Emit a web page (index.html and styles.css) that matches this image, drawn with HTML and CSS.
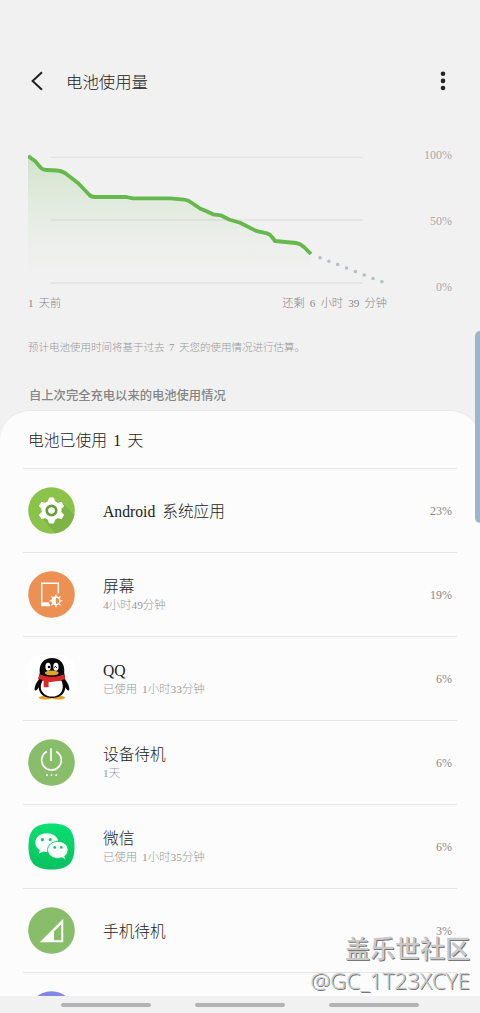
FILE: index.html
```html
<!DOCTYPE html>
<html lang="zh-CN">
<head>
    <meta charset="UTF-8">
    <title>电池使用量</title>
    <link rel="stylesheet" href="styles.css">
</head>
<body>
    <div class="screen">
        <header class="toolbar">
            <svg class="back" viewBox="0 0 12 20"><path d="M11 1.2L1.6 10L11 18.8"/></svg>
            <h1>电池使用量</h1>
            <svg class="more" viewBox="0 0 6 20"><circle cx="3" cy="2.7" r="2.3"/><circle cx="3" cy="9.9" r="2.3"/><circle cx="3" cy="17" r="2.3"/></svg>
        </header>

        <section class="usage">
            <svg class="chart" viewBox="28 150 360 136">
                <defs>
                    <linearGradient id="fill" x1="0" y1="156" x2="0" y2="282" gradientUnits="userSpaceOnUse">
                        <stop offset="0" stop-color="#6bbb50" stop-opacity=".25"/>
                        <stop offset="1" stop-color="#c8ddc0" stop-opacity="0"/>
                    </linearGradient>
                </defs>
                <path class="grid" d="M51 157.3H363"/>
                <path class="grid thick" d="M51 220H363M51 283H363"/>
                <path fill="url(#fill)" d="M28 156L35 161L41 168Q43 170 47 170L57 170.500Q61 170.700 65 173L78 183L89 194.500Q91 197 95 197H126L133 198.300H170L184 199.700Q188 200 192 203L200 208.500L206 211L213 214.300L220.700 215.300L229 219.500L240 222.700L256 230.800L267 233.300Q270 234 272 237L275 241L296 243Q300 243.500 304 247L311 254V282H28Z"/>
                <path class="level" d="M28 156L35 161L41 168Q43 170 47 170L57 170.500Q61 170.700 65 173L78 183L89 194.500Q91 197 95 197H126L133 198.300H170L184 199.700Q188 200 192 203L200 208.500L206 211L213 214.300L220.700 215.300L229 219.500L240 222.700L256 230.800L267 233.300Q270 234 272 237L275 241L296 243Q300 243.500 304 247L311 254"/>
                <path class="forecast" d="M320 257.700L382 281.900"/>
            </svg>
            <div class="scale">
                <span>100%</span>
                <span>50%</span>
                <span>0%</span>
            </div>
        </section>
        <div class="times">
            <span>1 天前</span>
            <span>还剩 6 小时 39 分钟</span>
        </div>
        <p class="note">预计电池使用时间将基于过去 7 天您的使用情况进行估算。</p>
        <h2>自上次完全充电以来的电池使用情况</h2>

        <main class="panel">
            <div class="total">电池已使用 1 天</div>
            <ul>
                <li>
                    <svg class="icon" viewBox="0 0 48 48">
                        <defs><clipPath id="disc"><circle cx="24" cy="24" r="23.800"/></clipPath></defs>
                        <circle cx="24" cy="24" r="23.800" fill="#8bc34a"/>
                        <path clip-path="url(#disc)" fill="#7eb446" d="M33 14L58 39V54H34L15 33Z"/>
                        <g transform="translate(24 24)" fill="#fff">
                            <circle r="10.200"/>
                            <path id="tooth" stroke="#fff" stroke-linejoin="round" d="M-2.200-12.800h4.400l1.200 5h-6.800zM-2.200 12.800h4.400l1.200-5h-6.800z"/>
                            <use href="#tooth" transform="rotate(60)"/>
                            <use href="#tooth" transform="rotate(120)"/>
                        </g>
                        <circle cx="24" cy="24" r="4.800" fill="#fff" stroke="#689f38" stroke-width="2.800"/>
                    </svg>
                    <div class="name">Android 系统应用</div>
                    <span class="percent">23%</span>
                </li>
                <li>
                    <svg class="icon" viewBox="0 0 48 48">
                        <circle cx="24" cy="24" r="23.800" fill="#ed9053"/>
                        <path fill="none" stroke="#fff" stroke-width="1.500" d="M31 23V12.500H14V35h8"/>
                        <path fill="#fff" d="M14 32h7l2 4h-9z"/>
                        <circle cx="28.500" cy="30.500" r="4" fill="none" stroke="#fff" stroke-width="1.400"/>
                        <path fill="#fff" d="M28.500 26.500a4 4 0 0 0 0 8z"/>
                        <path fill="none" stroke="#fff" stroke-width="1.400" d="M28.500 24v2M28.500 35v2M22 30.500h2M33 30.500h2M23.900 25.900l1.300 1.300M31.800 33.800l1.300 1.300M33.100 25.900l-1.300 1.300M25.200 33.800l-1.300 1.300"/>
                    </svg>
                    <div class="name">屏幕<small>4小时49分钟</small></div>
                    <span class="percent">19%</span>
                </li>
                <li>
                    <svg class="icon" viewBox="0 0 48 48">
                        <rect width="48" height="48" rx="14" fill="#fff"/>
                        <ellipse cx="18" cy="43.500" rx="7" ry="2" fill="#e5a526"/>
                        <ellipse cx="31" cy="43.500" rx="7" ry="2" fill="#e5a526"/>
                        <path d="M12 18C11 8 17 3 24.500 3S38 8 37 18L38 25C41 29 43 34 42 36c-1 1-3-1-4-3 0 7-6 11-13.500 11S11 40 11 33c-1 2-3 4-4 3-1-2 1-7 4-11z" fill="#080808"/>
                        <path fill="#fff" d="M15 26h19c2 3 2 9 0 12-4 6-15 6-19 0-3-3-2-9 0-12z"/>
                        <path fill="#d92926" d="M12 20q12.500 5 25 0l1 4.500q-8 3.500-17 3V33h-5v-7l-6-2z"/>
                        <ellipse cx="20.500" cy="12" rx="2.700" ry="4" fill="#fff"/>
                        <ellipse cx="28.500" cy="12" rx="2.700" ry="4" fill="#fff"/>
                        <circle cx="21.500" cy="12.300" r="1.300"/>
                        <path fill="none" stroke="#000" d="M26.800 13q1-3 2.700 0"/>
                        <ellipse cx="24.300" cy="18.300" rx="7" ry="2.500" fill="#e5a526"/>
                    </svg>
                    <div class="name">QQ<small>已使用 1小时33分钟</small></div>
                    <span class="percent">6%</span>
                </li>
                <li>
                    <svg class="icon" viewBox="0 0 48 48">
                        <circle cx="24" cy="24" r="23.800" fill="#88bd69"/>
                        <path fill="none" stroke="#fff" stroke-width="1.700" d="M19.300 12.800a10 10 0 1 0 9.400 0M23.500 9.500v13"/>
                        <path fill="#fff" d="M18.500 36h1.700v1.700h-1.700zM23.200 36h1.700v1.700h-1.700zM28 36h1.700v1.700H28z"/>
                    </svg>
                    <div class="name">设备待机<small>1天</small></div>
                    <span class="percent">6%</span>
                </li>
                <li>
                    <svg class="icon" viewBox="0 0 48 48">
                        <defs>
                            <linearGradient id="chat" x1="0" y1="0" x2="0" y2="1">
                                <stop offset="0" stop-color="#09e070"/>
                                <stop offset="1" stop-color="#07c160"/>
                            </linearGradient>
                        </defs>
                        <path fill="url(#chat)" d="M24 .500C41 .500 47.500 7 47.500 24S41 47.500 24 47.500.500 41 .500 24 7 .500 24 .500z"/>
                        <path fill="#fff" d="M19 10.500c7 0 12 4 12 9.500s-5 9.500-12 9.500q-2 0-3.500-.500L11 31.500l1-4C9 26 7.500 23 7.500 20c0-5.500 5-9.500 11.500-9.500z"/>
                        <path fill="#fff" stroke="#08cf67" stroke-width="1" d="M30.500 18.700c6 0 10.500 4 10.500 8.800q0 4-3.500 6.500l1 3.500-4-2q-2 .700-4 .700c-6 0-10.500-4-10.500-8.700s4.500-8.800 10.500-8.800z"/>
                        <g fill="#09c964"><circle cx="14.700" cy="17" r="1.600"/><circle cx="22.700" cy="17" r="1.600"/><circle cx="27.300" cy="25" r="1.400"/><circle cx="34" cy="25" r="1.400"/></g>
                    </svg>
                    <div class="name">微信<small>已使用 1小时35分钟</small></div>
                    <span class="percent">6%</span>
                </li>
                <li>
                    <svg class="icon" viewBox="0 0 48 48">
                        <circle cx="24" cy="24" r="23.800" fill="#88bd69"/>
                        <path fill="#fff" fill-rule="evenodd" d="M36 12v24H12zM34 17.500l-7.500 7.500v9H34z"/>
                    </svg>
                    <div class="name">手机待机</div>
                    <span class="percent">3%</span>
                </li>
                <li>
                    <svg class="icon" viewBox="0 0 48 48"><circle cx="24" cy="24" r="23.800" fill="#7f88e5"/></svg>
                </li>
            </ul>
        </main>

        <div class="edge-handle"></div>
        <div class="watermark"><b>盖乐世社区</b><span>@GC_1T23XCYE</span></div>
        <nav class="navbar"><i></i><i></i><i></i></nav>
    </div>
</body>
</html>
```
FILE: styles.css
```css
* {
    box-sizing: border-box;
}
body {
    margin: 0;
    background: #f1f1f1;
    color: #222;
    font-family: "Liberation Serif", "Noto Sans CJK SC", serif;
    font-weight: 300;
}
.screen {
    position: relative;
    height: 1013px;
    overflow: hidden;
}
.toolbar {
    display: flex;
    align-items: center;
    height: 100px;
    margin-top: 31px;
    padding: 0 34px 0 31px;
}
.back {
    width: 12px;
    height: 20px;
    fill: none;
    stroke: #222;
    stroke-width: 2;
}
h1 {
    flex: 1;
    margin: 0 0 0 23px;
    font-size: 16.4px;
    font-weight: 300;
}
.more {
    width: 6px;
    height: 20px;
    fill: #222;
}
.usage {
    display: flex;
    justify-content: space-between;
    height: 145px;
    margin-top: 17px;
    padding: 2px 28px 0 28px;
}
.chart {
    width: 360px;
    height: 136px;
}
.grid {
    stroke: #e4e4e4;
    stroke-width: 1.2;
}
.thick {
    stroke: #e4e5e4;
    stroke-width: 1.8;
}
.level {
    fill: none;
    stroke: #65b94c;
    stroke-width: 3.8;
    stroke-linejoin: round;
}
.forecast {
    stroke: #b3bdc1;
    stroke-width: 3.5;
    stroke-linecap: round;
    stroke-dasharray: 0 9.49;
}
.scale {
    display: flex;
    flex-direction: column;
    justify-content: space-between;
    height: 146px;
    margin-top: -2px;
    color: #aaa;
    font-size: 12px;
    line-height: 14px;
    text-align: right;
}
.times {
    display: flex;
    justify-content: space-between;
    padding: 0 93px 0 28px;
    margin-top: 2px;
    color: #888;
    font-size: 11.2px;
    line-height: 16px;
    word-spacing: 2.4px;
}
.note {
    margin: 29px 0 0 28px;
    color: #999;
    font-size: 10.5px;
    line-height: 16px;
    white-space: nowrap;
    word-spacing: 2px;
}
h2 {
    margin: 31px 0 0 29px;
    color: #858585;
    font-size: 12.3px;
    font-weight: 500;
    line-height: 18px;
}
.panel {
    height: 620px;
    margin-top: 5px;
    padding: 0 23px;
    border-top: 1px solid #e8e8e8;
    border-radius: 30px 30px 0 0;
    background: #fcfcfc;
}
.total {
    height: 57px;
    padding-left: 5px;
    font-size: 15.8px;
    line-height: 59px;
    word-spacing: 2.3px;
}
ul {
    margin: 0;
    padding: 0;
    list-style: none;
}
li {
    display: flex;
    align-items: center;
    height: 84px;
    padding: 0 5px;
    border-top: 1px solid #e5e5e5;
}
.icon {
    width: 47px;
    height: 47px;
    flex: none;
}
.name {
    flex: 1;
    margin: 1px 0 0 28px;
    font-size: 15.7px;
    line-height: 21px;
    word-spacing: 3px;
}
small {
    display: block;
    color: #999;
    font-size: 11.4px;
    line-height: 17px;
    word-spacing: 2px;
}
.percent {
    margin-top: 1px;
    color: #888;
    font-size: 12px;
    line-height: 12px;
}
.edge-handle {
    position: absolute;
    top: 331px;
    right: -5px;
    width: 10px;
    height: 192px;
    border-radius: 5px;
    background: #9fb6ca;
}
.watermark {
    position: absolute;
    right: 10px;
    bottom: 19px;
    display: flex;
    flex-direction: column;
    align-items: flex-end;
    gap: 8px;
    color: #c9c9c9;
    font-family: "Noto Sans", "Noto Sans CJK SC", sans-serif;
    text-shadow: 1px 1px 0 #777;
}
.watermark b {
    font-size: 25px;
    font-weight: 500;
    line-height: 23px;
}
.watermark span {
    font-size: 22.4px;
    font-weight: 300;
    line-height: 26px;
}
.navbar {
    position: absolute;
    bottom: 0;
    left: 0;
    display: flex;
    justify-content: center;
    gap: 44px;
    width: 100%;
    height: 17px;
    padding-top: 7px;
    background: #f1f1f1;
}
.navbar i {
    width: 90px;
    height: 4px;
    border-radius: 2px;
    background: #b3b3b3;
}
```
